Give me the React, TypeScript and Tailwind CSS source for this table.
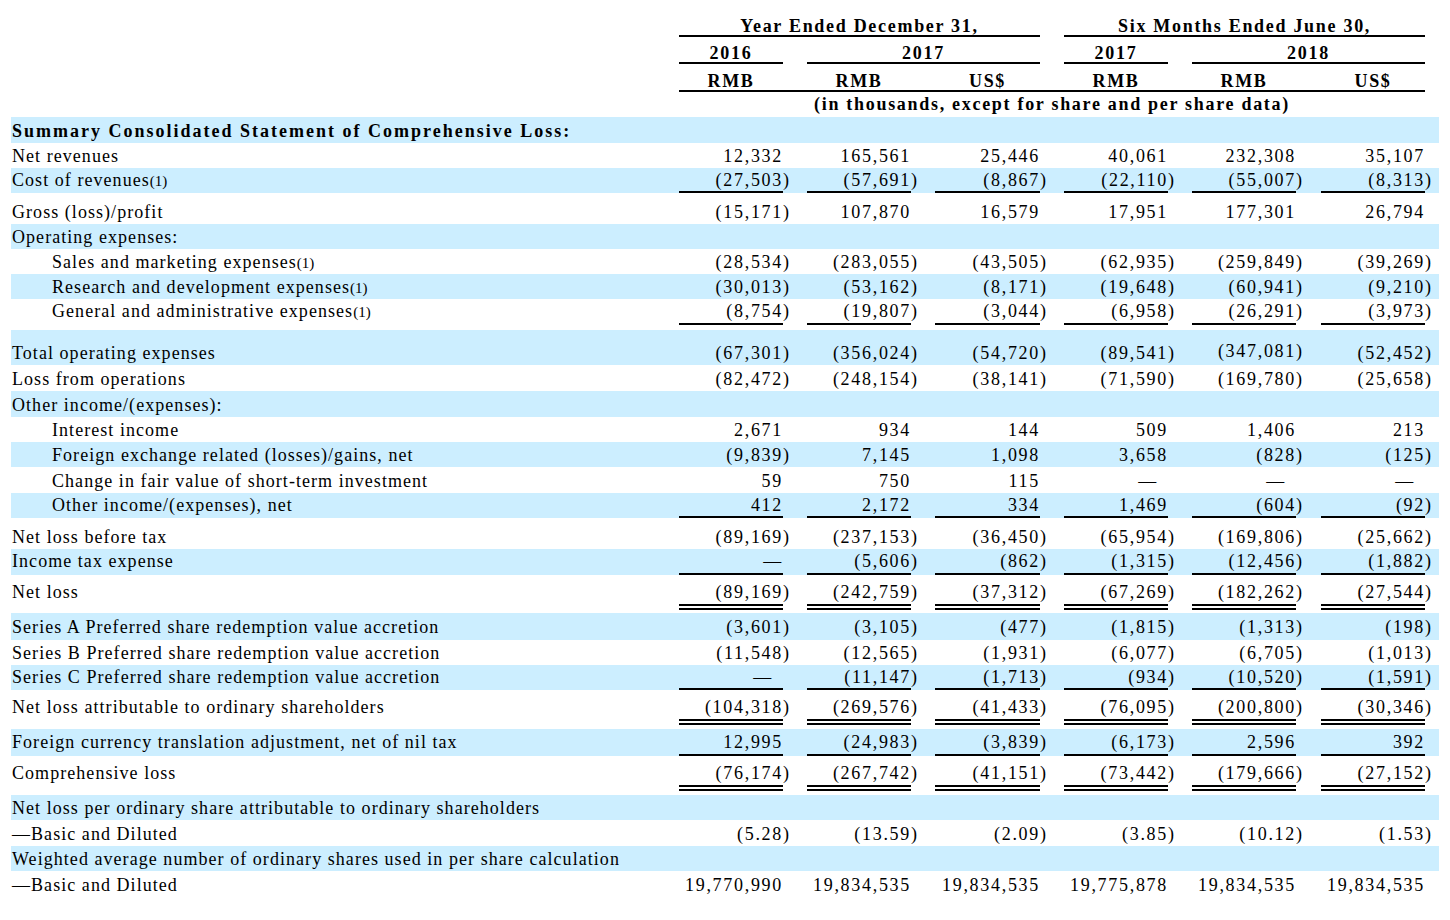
import React from 'react';

type Line = {
  label: string;
  fn?: boolean;
  vals?: string[];
  blue?: boolean;
  indent?: boolean;
  bold?: boolean;
  h: string;
  pt?: string;
  lh: string;
  ul?: 's' | 'd';
};

// value column + trailing paren/gap column, 668px label column in front
const COLS = [
  { v: 'w-[104px]', p: 'w-[24px]' },
  { v: 'w-[104px]', p: 'w-[24px]' },
  { v: 'w-[105px]', p: 'w-[24px]' },
  { v: 'w-[104px]', p: 'w-[24px]' },
  { v: 'w-[104px]', p: 'w-[25px]' },
  { v: 'w-[104px]', p: 'w-[14px]' },
];

const ROWS: Line[] = [
  { label: 'Summary Consolidated Statement of Comprehensive Loss:', bold: true, blue: true, h: 'h-[26px]', lh: 'leading-[26px]' },
  { label: 'Net revenues', vals: ['12,332', '165,561', '25,446', '40,061', '232,308', '35,107'], h: 'h-[25px]', lh: 'leading-[25px]' },
  { label: 'Cost of revenues', fn: true, blue: true, vals: ['(27,503)', '(57,691)', '(8,867)', '(22,110)', '(55,007)', '(8,313)'], h: 'h-[25px]', lh: 'leading-[22px]', ul: 's' },
  { label: 'Gross (loss)/profit', vals: ['(15,171)', '107,870', '16,579', '17,951', '177,301', '26,794'], h: 'h-[31px]', pt: 'pt-[6px]', lh: 'leading-[25px]' },
  { label: 'Operating expenses:', blue: true, h: 'h-[25px]', lh: 'leading-[25px]' },
  { label: 'Sales and marketing expenses', fn: true, indent: true, vals: ['(28,534)', '(283,055)', '(43,505)', '(62,935)', '(259,849)', '(39,269)'], h: 'h-[25px]', lh: 'leading-[25px]' },
  { label: 'Research and development expenses', fn: true, indent: true, blue: true, vals: ['(30,013)', '(53,162)', '(8,171)', '(19,648)', '(60,941)', '(9,210)'], h: 'h-[25px]', lh: 'leading-[25px]' },
  { label: 'General and administrative expenses', fn: true, indent: true, vals: ['(8,754)', '(19,807)', '(3,044)', '(6,958)', '(26,291)', '(3,973)'], h: 'h-[31px]', lh: 'leading-[23px]', ul: 's' },
  { label: 'Total operating expenses', blue: true, vals: ['(67,301)', '(356,024)', '(54,720)', '(89,541)', '^(347,081)', '(52,452)'], h: 'h-[35px]', pt: 'pt-[10px]', lh: 'leading-[25px]' },
  { label: 'Loss from operations', vals: ['(82,472)', '(248,154)', '(38,141)', '(71,590)', '(169,780)', '(25,658)'], h: 'h-[26px]', lh: 'leading-[26px]' },
  { label: 'Other income/(expenses):', blue: true, h: 'h-[26px]', lh: 'leading-[26px]' },
  { label: 'Interest income', indent: true, vals: ['2,671', '934', '144', '509', '1,406', '213'], h: 'h-[25px]', lh: 'leading-[25px]' },
  { label: 'Foreign exchange related (losses)/gains, net', indent: true, blue: true, vals: ['(9,839)', '7,145', '1,098', '3,658', '(828)', '(125)'], h: 'h-[25px]', lh: 'leading-[25px]' },
  { label: 'Change in fair value of short-term investment', indent: true, vals: ['59', '750', '115', '—~', '—~', '—~'], h: 'h-[26px]', lh: 'leading-[26px]' },
  { label: 'Other income/(expenses), net', indent: true, blue: true, vals: ['412', '2,172', '334', '1,469', '(604)', '(92)'], h: 'h-[25px]', lh: 'leading-[22px]', ul: 's' },
  { label: 'Net loss before tax', vals: ['(89,169)', '(237,153)', '(36,450)', '(65,954)', '(169,806)', '(25,662)'], h: 'h-[31px]', pt: 'pt-[5px]', lh: 'leading-[26px]' },
  { label: 'Income tax expense', blue: true, vals: ['—', '(5,606)', '(862)', '(1,315)', '(12,456)', '(1,882)'], h: 'h-[26px]', lh: 'leading-[23px]', ul: 's' },
  { label: 'Net loss', vals: ['(89,169)', '(242,759)', '(37,312)', '(67,269)', '(182,262)', '(27,544)'], h: 'h-[38px]', pt: 'pt-[5px]', lh: 'leading-[23px]', ul: 'd' },
  { label: 'Series A Preferred share redemption value accretion', blue: true, vals: ['(3,601)', '(3,105)', '(477)', '(1,815)', '(1,313)', '(198)'], h: 'h-[27px]', lh: 'leading-[27px]' },
  { label: 'Series B Preferred share redemption value accretion', vals: ['(11,548)', '(12,565)', '(1,931)', '(6,077)', '(6,705)', '(1,013)'], h: 'h-[25px]', lh: 'leading-[25px]' },
  { label: 'Series C Preferred share redemption value accretion', blue: true, vals: ['—~', '(11,147)', '(1,713)', '(934)', '(10,520)', '(1,591)'], h: 'h-[25px]', lh: 'leading-[22px]', ul: 's' },
  { label: 'Net loss attributable to ordinary shareholders', vals: ['(104,318)', '(269,576)', '(41,433)', '(76,095)', '(200,800)', '(30,346)'], h: 'h-[39px]', pt: 'pt-[5px]', lh: 'leading-[23px]', ul: 'd' },
  { label: 'Foreign currency translation adjustment, net of nil tax', blue: true, vals: ['12,995', '(24,983)', '(3,839)', '(6,173)', '2,596', '392'], h: 'h-[27px]', lh: 'leading-[24px]', ul: 's' },
  { label: 'Comprehensive loss', vals: ['(76,174)', '(267,742)', '(41,151)', '(73,442)', '(179,666)', '(27,152)'], h: 'h-[39px]', pt: 'pt-[5px]', lh: 'leading-[23px]', ul: 'd' },
  { label: 'Net loss per ordinary share attributable to ordinary shareholders', blue: true, h: 'h-[25px]', lh: 'leading-[25px]' },
  { label: '—Basic and Diluted', vals: ['(5.28)', '(13.59)', '(2.09)', '(3.85)', '(10.12)', '(1.53)'], h: 'h-[26px]', lh: 'leading-[26px]' },
  { label: 'Weighted average number of ordinary shares used in per share calculation', blue: true, h: 'h-[25px]', lh: 'leading-[25px]' },
  { label: '—Basic and Diluted', vals: ['19,770,990', '19,834,535', '19,834,535', '19,775,878', '19,834,535', '19,834,535'], h: 'h-[26px]', lh: 'leading-[26px]' },
];

function Cells({ row }: { row: Line }) {
  const underline =
    row.ul === 's' ? 'border-b-2 border-black' : row.ul === 'd' ? 'border-b-[6px] border-double border-black' : '';
  return (
    <>
      {COLS.map((c, i) => {
        let s = row.vals ? row.vals[i] : '';
        const lift = s.startsWith('^');
        if (lift) s = s.slice(1);
        const inset = s.endsWith('~');
        if (inset) s = s.slice(0, -1);
        const close = s.endsWith(')');
        const main = close ? s.slice(0, -1) : s;
        return (
          <React.Fragment key={i}>
            <div
              className={`${c.v} shrink-0 pt-[1px] text-right tracking-[1.7px] ${row.lh} ${row.vals ? underline : ''} ${inset ? 'pr-[10px]' : ''}`}
            >
              <span className={lift ? 'inline-block -translate-y-[2px]' : ''}>{main || '\u00a0'}</span>
            </div>
            <div className={`${c.p} shrink-0 pt-[1px] ${row.lh} ${lift ? '-translate-y-[2px]' : ''}`}>{close ? ')' : ''}</div>
          </React.Fragment>
        );
      })}
    </>
  );
}

function BodyRow({ row }: { row: Line }) {
  return (
    <div className={`flex items-start ${row.h} ${row.pt ?? ''} ${row.blue ? 'bg-[#cceeff]' : ''}`}>
      <div
        className={`w-[668px] shrink-0 pt-[1px] whitespace-nowrap ${row.lh} ${row.indent ? 'pl-[41px]' : 'pl-[1px]'} ${
          row.bold ? 'font-bold tracking-[2px]' : 'tracking-[1.05px]'
        }`}
      >
        {row.label}
        {row.fn && <span className="text-[15px] tracking-normal">(1)</span>}
      </div>
      <Cells row={row} />
    </div>
  );
}

export default function App() {
  return (
    <div className="min-h-screen bg-white text-black font-['Liberation_Serif','Times_New_Roman',serif] text-[18px]">
      <div className="ml-[11px] w-[1428px]">
        {/* column headings */}
        <div className="font-bold tracking-[1.7px]">
          <div className="flex items-end h-[37px]">
            <div className="w-[668px] shrink-0" />
            <div className="w-[361px] shrink-0 text-center leading-[18px] border-b-2 border-black">Year Ended December 31,</div>
            <div className="w-[24px] shrink-0" />
            <div className="w-[361px] shrink-0 text-center leading-[18px] border-b-2 border-black">Six Months Ended June 30,</div>
          </div>
          <div className="flex items-end h-[27px]">
            <div className="w-[668px] shrink-0" />
            <div className="w-[104px] shrink-0 text-center leading-[18px] border-b-2 border-black">2016</div>
            <div className="w-[24px] shrink-0" />
            <div className="w-[233px] shrink-0 text-center leading-[18px] border-b-2 border-black">2017</div>
            <div className="w-[24px] shrink-0" />
            <div className="w-[104px] shrink-0 text-center leading-[18px] border-b-2 border-black">2017</div>
            <div className="w-[24px] shrink-0" />
            <div className="w-[233px] shrink-0 text-center leading-[18px] border-b-2 border-black">2018</div>
          </div>
          <div className="flex items-end h-[28px]">
            <div className="w-[668px] shrink-0" />
            <div className="flex w-[746px] shrink-0 border-b-2 border-black leading-[18px]">
              <div className="w-[104px] text-center">RMB</div>
              <div className="w-[24px]" />
              <div className="w-[104px] text-center">RMB</div>
              <div className="w-[24px]" />
              <div className="w-[105px] text-center">US$</div>
              <div className="w-[24px]" />
              <div className="w-[104px] text-center">RMB</div>
              <div className="w-[24px]" />
              <div className="w-[104px] text-center">RMB</div>
              <div className="w-[25px]" />
              <div className="w-[104px] text-center">US$</div>
            </div>
          </div>
          <div className="flex h-[25px]">
            <div className="w-[668px] shrink-0" />
            <div className="w-[746px] shrink-0 text-center leading-[25px]">
              (in thousands, except for share and per share data)
            </div>
          </div>
        </div>

        {ROWS.map((r, i) => (
          <BodyRow key={i} row={r} />
        ))}
      </div>
    </div>
  );
}
